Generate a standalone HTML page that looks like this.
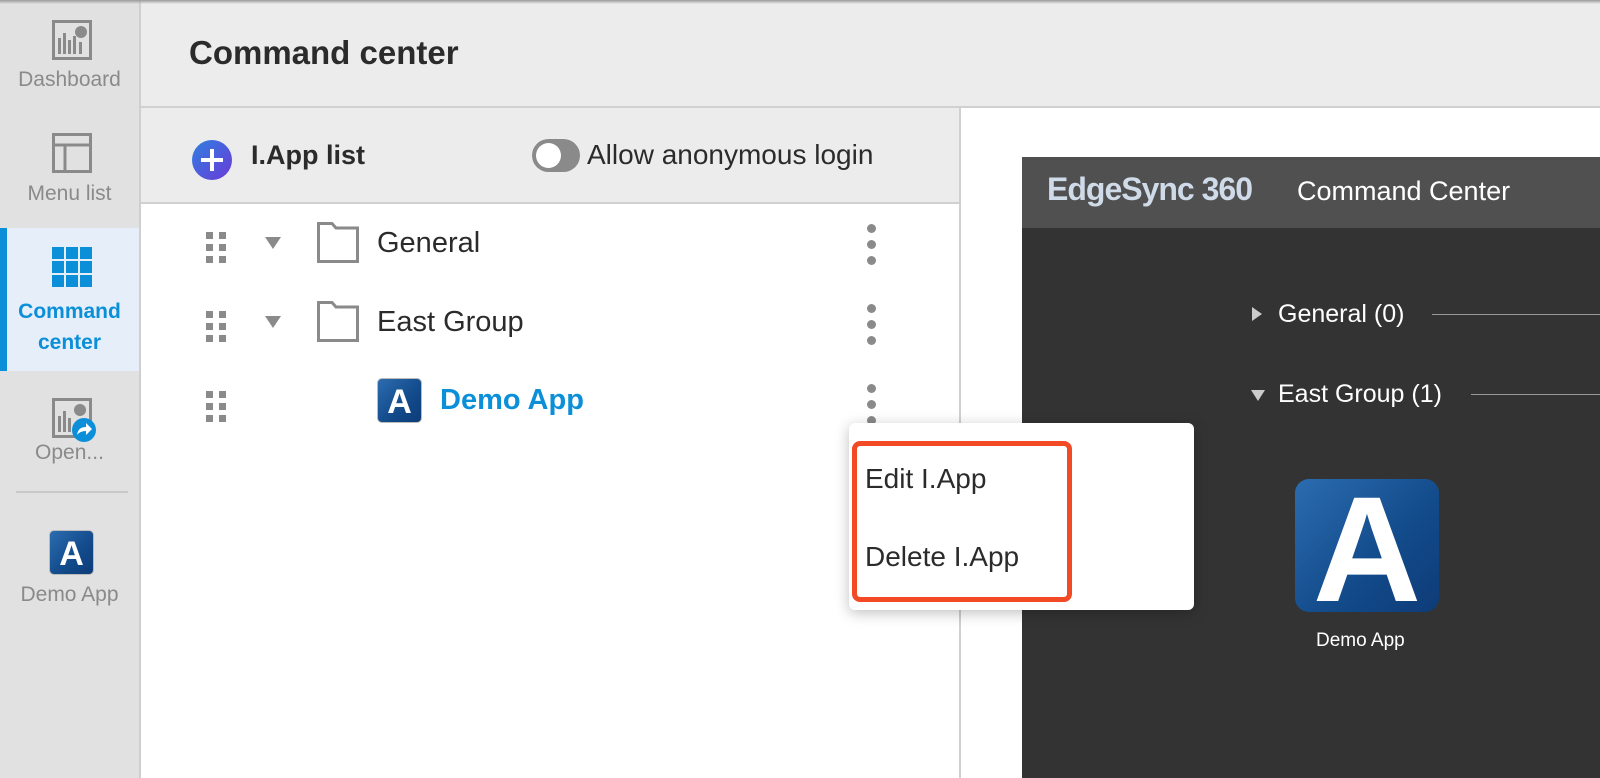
<!DOCTYPE html>
<html><head><meta charset="utf-8"><style>
*{margin:0;padding:0;box-sizing:border-box}
body{width:1600px;height:778px;overflow:hidden;background:#fff;font-family:"Liberation Sans",Arial,sans-serif;position:relative}
.abs{position:absolute}
.side{left:0;top:0;width:141px;height:778px;background:#e1e1e1;border-right:2px solid #cfcfcf}
.si{position:absolute;left:0;width:139px;text-align:center;color:#8a8a8a;font-size:21px}
.top{left:141px;top:0;width:1459px;height:108px;background:#ececec;border-bottom:2px solid #d0d0d0}
.ph{left:141px;top:108px;width:818px;height:96px;background:#ececec;border-bottom:2px solid #d0d0d0}
.grip{position:absolute;left:206px;width:20px;height:31px}
.grip i{position:absolute;width:7px;height:7px;background:#8a8a8a}
.dots{position:absolute;left:867px;width:10px}
.dots i{position:absolute;left:0;width:9px;height:9px;border-radius:50%;background:#8a8a8a}
.appicon{background:linear-gradient(135deg,#2b6cb0,#124a8a 60%,#0e3c78);border-radius:5px;color:#fff;font-weight:bold;text-align:center;position:absolute}
</style></head><body>
<div class="abs" style="left:0;top:0;width:1600px;height:4px;background:linear-gradient(#9a9a9a,rgba(0,0,0,0));z-index:5"></div>
<div class="abs side">
 <svg class="abs" style="left:52px;top:20px" width="40" height="40" viewBox="0 0 40 40"><rect x="1.5" y="1.5" width="37" height="37" fill="none" stroke="#8a8a8a" stroke-width="3"/><rect x="6" y="18" width="3" height="16" fill="#8a8a8a"/><rect x="11" y="13" width="3" height="21" fill="#8a8a8a"/><rect x="16" y="20" width="3" height="14" fill="#8a8a8a"/><rect x="21" y="16" width="3" height="18" fill="#8a8a8a"/><rect x="27" y="22" width="3" height="12" fill="#8a8a8a"/><circle cx="29" cy="12" r="6" fill="#8a8a8a"/></svg>
 <div class="si" style="top:68px">Dashboard</div>
 <svg class="abs" style="left:52px;top:133px" width="40" height="40" viewBox="0 0 40 40"><rect x="1.5" y="1.5" width="37" height="37" fill="none" stroke="#8a8a8a" stroke-width="3"/><line x1="1.5" y1="12" x2="38.5" y2="12" stroke="#8a8a8a" stroke-width="3"/><line x1="13" y1="12" x2="13" y2="38" stroke="#8a8a8a" stroke-width="3"/></svg>
 <div class="si" style="top:182px">Menu list</div>
 <div class="abs" style="left:0;top:228px;width:139px;height:143px;background:#e6eef9"></div>
 <div class="abs" style="left:0;top:228px;width:7px;height:143px;background:#0b8fd9"></div>
 <svg class="abs" style="left:52px;top:247px" width="40" height="40" viewBox="0 0 40 40" fill="#0b8fd9"><rect x="0" y="0" width="12" height="12"/><rect x="14" y="0" width="12" height="12"/><rect x="28" y="0" width="12" height="12"/><rect x="0" y="14" width="12" height="12"/><rect x="14" y="14" width="12" height="12"/><rect x="28" y="14" width="12" height="12"/><rect x="0" y="28" width="12" height="12"/><rect x="14" y="28" width="12" height="12"/><rect x="28" y="28" width="12" height="12"/></svg>
 <div class="si" style="top:296px;color:#0b8fd9;font-weight:bold;line-height:31px">Command<br>center</div>
 <svg class="abs" style="left:52px;top:398px" width="46" height="46" viewBox="0 0 46 46"><rect x="1.5" y="1.5" width="37" height="37" fill="none" stroke="#8a8a8a" stroke-width="3"/><rect x="6" y="18" width="3" height="16" fill="#8a8a8a"/><rect x="11" y="13" width="3" height="21" fill="#8a8a8a"/><rect x="16" y="20" width="3" height="14" fill="#8a8a8a"/><circle cx="28" cy="12" r="6" fill="#8a8a8a"/><circle cx="32" cy="32" r="12" fill="#0b8fd9"/><path d="M25 37 q1-8 9-8 v-4 l6 6 l-6 6 v-4 q-6 0-9 4z" fill="#fff"/></svg>
 <div class="si" style="top:441px">Open...</div>
 <div class="abs" style="left:16px;top:491px;width:112px;height:2px;background:#c8c8c8"></div>
 <div class="appicon" style="left:49px;top:530px;width:45px;height:45px;font-size:34px;line-height:46px;border:1px solid #bbb">A</div>
 <div class="si" style="top:583px">Demo App</div>
</div>
<div class="abs top"><div class="abs" style="left:48px;top:34px;font-size:33px;font-weight:bold;color:#2b2b2b">Command center</div></div>
<div class="abs ph">
 <div class="abs" style="left:51px;top:32px;width:40px;height:40px;border-radius:50%;background:linear-gradient(135deg,#2f80e0,#6a3ad8)"></div>
 <div class="abs" style="left:69px;top:41px;width:4px;height:22px;background:#fff"></div>
 <div class="abs" style="left:60px;top:50px;width:22px;height:4px;background:#fff"></div>
 <div class="abs" style="left:110px;top:32px;font-size:27px;font-weight:bold;color:#2b2b2b">I.App list</div>
 <div class="abs" style="left:391px;top:31px;width:48px;height:33px;border-radius:17px;background:#8a8a8a"></div>
 <div class="abs" style="left:395px;top:35px;width:25px;height:25px;border-radius:50%;background:#fff"></div>
 <div class="abs" style="left:446px;top:31px;font-size:28px;color:#2b2b2b">Allow anonymous login</div>
</div>
<div class="abs" style="left:959px;top:108px;width:2px;height:670px;background:#d0d0d0"></div>

<div class="grip" style="top:232px"><i style="left:0;top:0"></i><i style="left:13px;top:0"></i><i style="left:0;top:12px"></i><i style="left:13px;top:12px"></i><i style="left:0;top:24px"></i><i style="left:13px;top:24px"></i></div>
<div class="abs" style="left:265px;top:237px;width:0;height:0;border-left:8px solid transparent;border-right:8px solid transparent;border-top:12px solid #8a8a8a"></div>
<svg class="abs" style="left:317px;top:222px" width="42" height="41" viewBox="0 0 42 41"><path d="M1.5 39.5 V1.5 H15 L19 6 H40.5 V39.5Z" fill="none" stroke="#8a8a8a" stroke-width="3"/></svg>
<div class="abs" style="left:377px;top:227px;font-size:29px;color:#2b2b2b">General</div>
<div class="dots" style="top:224px"><i style="top:0"></i><i style="top:16px"></i><i style="top:32px"></i></div>

<div class="grip" style="top:311px"><i style="left:0;top:0"></i><i style="left:13px;top:0"></i><i style="left:0;top:12px"></i><i style="left:13px;top:12px"></i><i style="left:0;top:24px"></i><i style="left:13px;top:24px"></i></div>
<div class="abs" style="left:265px;top:316px;width:0;height:0;border-left:8px solid transparent;border-right:8px solid transparent;border-top:12px solid #8a8a8a"></div>
<svg class="abs" style="left:317px;top:301px" width="42" height="41" viewBox="0 0 42 41"><path d="M1.5 39.5 V1.5 H15 L19 6 H40.5 V39.5Z" fill="none" stroke="#8a8a8a" stroke-width="3"/></svg>
<div class="abs" style="left:377px;top:306px;font-size:29px;color:#2b2b2b">East Group</div>
<div class="dots" style="top:304px"><i style="top:0"></i><i style="top:16px"></i><i style="top:32px"></i></div>

<div class="grip" style="top:391px"><i style="left:0;top:0"></i><i style="left:13px;top:0"></i><i style="left:0;top:12px"></i><i style="left:13px;top:12px"></i><i style="left:0;top:24px"></i><i style="left:13px;top:24px"></i></div>
<div class="appicon" style="left:377px;top:378px;width:45px;height:45px;font-size:34px;line-height:46px;border:1px solid #bbb">A</div>
<div class="abs" style="left:440px;top:384px;font-size:29px;font-weight:bold;color:#0b8fd9">Demo App</div>
<div class="dots" style="top:384px"><i style="top:0"></i><i style="top:16px"></i><i style="top:32px"></i></div>

<div class="abs" style="left:1022px;top:157px;width:578px;height:621px;background:#333"></div>
<div class="abs" style="left:1022px;top:157px;width:578px;height:71px;background:#505050"></div>
<div class="abs" style="left:1047px;top:171px;font-size:32px;font-weight:bold;color:#cfdbe8;letter-spacing:-1px">EdgeSync 360</div>
<div class="abs" style="left:1297px;top:176px;font-size:27px;color:#fff">Command Center</div>
<div class="abs" style="left:1252px;top:307px;width:0;height:0;border-top:7px solid transparent;border-bottom:7px solid transparent;border-left:10px solid #ccc"></div>
<div class="abs" style="left:1278px;top:300px;font-size:25px;color:#fff">General (0)</div>
<div class="abs" style="left:1432px;top:314px;width:168px;height:1px;background:#999"></div>
<div class="abs" style="left:1251px;top:390px;width:0;height:0;border-left:7px solid transparent;border-right:7px solid transparent;border-top:11px solid #ccc"></div>
<div class="abs" style="left:1278px;top:380px;font-size:25px;color:#fff">East Group (1)</div>
<div class="abs" style="left:1471px;top:394px;width:129px;height:1px;background:#999"></div>
<div class="appicon" style="left:1295px;top:479px;width:144px;height:133px;border-radius:14px;font-size:150px;line-height:140px">A</div>
<div class="abs" style="left:1316px;top:630px;font-size:19px;color:#fff">Demo App</div>

<div class="abs" style="left:849px;top:423px;width:345px;height:187px;background:#fff;border-radius:6px;box-shadow:0 3px 14px rgba(0,0,0,.25)"></div>
<div class="abs" style="left:852px;top:441px;width:220px;height:161px;border:5px solid #f24a25;border-radius:8px"></div>
<div class="abs" style="left:865px;top:463px;font-size:28px;color:#2b2b2b">Edit I.App</div>
<div class="abs" style="left:865px;top:541px;font-size:28px;color:#2b2b2b">Delete I.App</div>
</body></html>
